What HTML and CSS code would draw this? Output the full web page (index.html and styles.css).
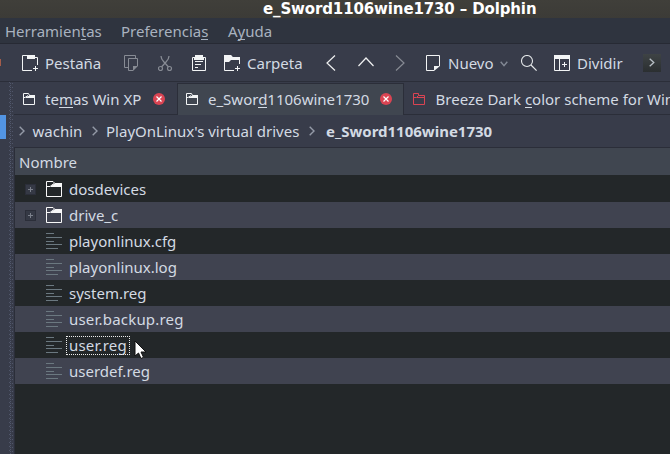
FILE: index.html
```
<!DOCTYPE html>
<html lang="es">
<head>
<meta charset="utf-8">
<title>e_Sword1106wine1730 – Dolphin</title>
<link rel="stylesheet" href="styles.css">
</head>
<body>
<svg width="0" height="0" class="defs">
  <symbol id="folder" viewBox="0 0 16 16"><path d="M.5 15.5V.5H7L9 2.5H15.5V15.5ZM.5 5.5H4L8 2.5" fill="none" stroke="currentColor"/><path d="M9 2H16V6H5V5L8.5 2.5Z" fill="currentColor"/></symbol>
  <symbol id="tabfolder" viewBox="0 0 12 12"><path d="M.5 .5H5.5L6.5 2.5H11.5V11.5H.5ZM.5 4.5H2L5 2.5" fill="none" stroke="currentColor"/><path d="M7 2H12V5H3V4L6.5 2.5Z" fill="currentColor"/></symbol>
  <symbol id="outline" viewBox="0 0 12 12"><path d="M.5 .5H5.5V2.5H11.5V11.5H.5ZM.5 4.5H3.5L5.5 2.5M4 4.5H11.5" fill="none" stroke="currentColor"/></symbol>
  <symbol id="close" viewBox="0 0 12 12"><circle cx="6" cy="6" r="6" fill="#da4453"/><path d="M3.5 3.5L8.5 8.5M8.5 3.5L3.5 8.5" stroke="#fff" stroke-width="1.2"/></symbol>
  <symbol id="lines" viewBox="0 0 16 16"><path d="M0 .5H8M0 4.5H16M0 8.5H8M0 11.5H16M0 15.5H12" stroke="#6b7880"/></symbol>
  <symbol id="chev" viewBox="0 0 6 10"><path d="M.7 .7L5 5L.7 9.3" fill="none" stroke="#949aa7" stroke-width="1.4"/></symbol>
</svg>
<header class="title">e_Sword1106wine1730 – Dolphin</header>
<nav class="menu"><span class="m1">Herramien<u>t</u>as</span><span class="m2">Preferencia<u>s</u></span><span>A<u>y</u>uda</span></nav>
<div class="toolbar">
  <span class="cut-label"></span>
  <svg class="ico" viewBox="0 0 16 16"><path d="M10 15.5H.5V.5H5M13 2.5H15.5V10M13.5 11V16M11 13.5H16" fill="none" stroke="#f2f4f5"/><path d="M5 0H13V4H5Z" fill="#f2f4f5"/></svg>
  <span>Pestaña</span>
  <svg class="ico dim" viewBox="0 0 16 16"><path d="M4 12.5H.5V.5H11.5V3M9 15.5H4.5V3.5H13.5V11" fill="none" stroke="currentColor"/><path d="M9 16V11H14Z" fill="currentColor"/></svg>
  <svg class="ico dim" viewBox="0 0 16 16"><path d="M3 1Q3 4 6 7L10.5 12M11 1Q11 4 8 7L3.5 12" fill="none" stroke="currentColor" stroke-width="1.3"/><circle cx="2.5" cy="13.5" r="2" fill="none" stroke="currentColor" stroke-width="1.2"/><circle cx="11.5" cy="13.5" r="2" fill="none" stroke="currentColor" stroke-width="1.2"/></svg>
  <svg class="ico" viewBox="0 0 16 16"><path d="M.5 2.5H13.5V15.5H.5ZM3 6.5H11M3 9.5H9M3 12.5H6" fill="none" stroke="#f2f4f5"/><path d="M3 0H11V2H12V5H2V2H3Z" fill="#f2f4f5"/></svg>
  <svg class="ico" viewBox="0 0 16 16"><path d="M10 15.5H.5V.5H7L8.5 2.5H15.5V9M13.5 11V16M11 13.5H16" fill="none" stroke="#f2f4f5"/><path d="M0 0H7L8.5 2H16V5H7L5 7H0Z" fill="#f2f4f5"/></svg>
  <span>Carpeta</span>
  <svg class="ico" viewBox="0 0 16 16"><path d="M12 .5L4 8L12 15.5" fill="none" stroke="#eff0f1" stroke-width="1.2"/></svg>
  <svg class="ico" viewBox="0 0 16 16"><path d="M.5 11L8 3L15.5 11" fill="none" stroke="#eff0f1" stroke-width="1.2"/></svg>
  <svg class="ico dim" viewBox="0 0 16 16"><path d="M4 .5L12 8L4 15.5" fill="none" stroke="currentColor" stroke-width="1.2"/></svg>
  <svg class="ico" viewBox="0 0 16 16"><path d="M9 15.5H1.5V.5H14.5V11" fill="none" stroke="#f2f4f5"/><path d="M9 16V11H15Z" fill="#f2f4f5"/></svg>
  <span>Nuevo</span>
  <svg class="down" viewBox="0 0 8 6"><path d="M.7 .7L4 4.7L7.3 .7" fill="none" stroke="#838995" stroke-width="1.4"/></svg>
  <svg class="ico" viewBox="0 0 16 16"><circle cx="6" cy="6" r="5.5" fill="none" stroke="#e5e8ea" stroke-width="1.1"/><path d="M10 10L15.6 15.6" stroke="#e5e8ea" stroke-width="1.2"/></svg>
  <svg class="ico" viewBox="0 0 16 16"><path d="M.5 .5H15.5V15.5H.5ZM5.5 4V16M10.5 7V12M8 9.5H13" fill="none" stroke="#f2f4f5"/><path d="M0 0H16V4H0Z" fill="#f2f4f5"/></svg>
  <span>Dividir</span>
  <span class="more"><svg width="6" height="9" viewBox="0 0 6 9"><path d="M.7 .7L4.8 4.5L.7 8.3" fill="none" stroke="#b9c0c7" stroke-width="1.3"/></svg></span>
</div>
<div class="main">
  <aside class="side"><span class="selected"></span><svg class="grip" width="5" height="372"><defs><pattern id="dots" width="5" height="4" patternUnits="userSpaceOnUse"><path d="M0 0h1v1H0zM1 1h1v1H1zM3 1h1v1H3zM1 3h1v1H1z" fill="#50566a"/></pattern></defs><rect width="5" height="372" fill="url(#dots)"/></svg></aside>
  <section class="content">
    <div class="tabs">
      <div class="tab t1"><svg class="ti"><use href="#tabfolder"/></svg><span>te<u>m</u>as Win XP</span><svg class="x"><use href="#close"/></svg></div>
      <div class="tab t2"><svg class="ti"><use href="#tabfolder"/></svg><span>e_Swor<u>d</u>1106wine1730</span><svg class="x"><use href="#close"/></svg></div>
      <div class="tab t3"><svg class="ti red"><use href="#outline"/></svg><span>Breeze Dark <u>c</u>olor scheme for Win</span></div>
    </div>
    <div class="crumbs"><svg class="ch"><use href="#chev"/></svg><span>wachin</span><svg class="ch"><use href="#chev"/></svg><span>PlayOnLinux's virtual drives</span><svg class="ch"><use href="#chev"/></svg><b>e_Sword1106wine1730</b></div>
    <div class="list">
      <div class="head">Nombre</div>
      <div class="row"><i class="plus"></i><svg class="fi"><use href="#folder"/></svg><span>dosdevices</span></div>
      <div class="row"><i class="plus"></i><svg class="fi"><use href="#folder"/></svg><span>drive_c</span></div>
      <div class="row"><i></i><svg class="fi"><use href="#lines"/></svg><span>playonlinux.cfg</span></div>
      <div class="row"><i></i><svg class="fi"><use href="#lines"/></svg><span>playonlinux.log</span></div>
      <div class="row"><i></i><svg class="fi"><use href="#lines"/></svg><span>system.reg</span></div>
      <div class="row"><i></i><svg class="fi"><use href="#lines"/></svg><span class="wide">user.backup.reg</span></div>
      <div class="row"><i></i><svg class="fi"><use href="#lines"/></svg><span class="focus">user.reg</span></div>
      <div class="row"><i></i><svg class="fi"><use href="#lines"/></svg><span>userdef.reg</span></div>
    </div>
  </section>
</div>
<svg class="pointer" viewBox="0 0 14 21"><path d="M1 1V16L4.5 13L7 18.5L9.5 17.3L7 12H12Z" fill="#fff" stroke="#111"/></svg>
</body>
</html>
```
FILE: styles.css
```
* { box-sizing: border-box; }
body { margin: 0; width: 670px; height: 454px; overflow: hidden; position: relative; background: #383c4a; color: #d3dae3; font: 15px/20px "Noto Sans", sans-serif; white-space: nowrap; }
svg { display: block; flex: none; }
.defs { position: absolute; }
u { text-decoration: none; background: linear-gradient(currentColor, currentColor) 0 18px / 100% 1px no-repeat; }
.title { height: 18px; padding-left: 263px; background: linear-gradient(#403f3a, #3c3b37); color: #fff; font: 700 15px/18px "DejaVu Sans", sans-serif; letter-spacing: -.13px; }
.menu { display: flex; height: 26px; padding: 3px 0 0 5px; background: #2f343f; border-bottom: 1px solid #272a34; color: #a9b2bf; }
.m1 { width: 116px; }
.m2 { width: 107px; }
.toolbar { display: grid; grid-template-columns: 22px 23px 79px 34px 34px 32px 23px 76px 35px 34px 33px 23px 52px 21px 33px 23px 66px 18px; align-items: center; height: 38px; border-bottom: 1px solid #2b2e39; }
.ico { width: 16px; height: 16px; }
.dim { color: #878b94; }
.cut-label { width: 1px; height: 7px; background: #a45c4a; }
.down { width: 8px; height: 6px; margin-top: 3px; }
.more { display: grid; place-items: center; width: 18px; height: 18px; background: linear-gradient(#3e4345, #2b2f31); }
.main { display: flex; height: 372px; }
.side { display: flex; width: 14px; justify-content: space-between; }
.selected { width: 6px; height: 24px; margin-top: 33px; background: #5294e2; }
.content { width: 656px; }
.tabs { display: flex; height: 33px; }
.tab { display: flex; align-items: center; flex: none; height: 33px; border-bottom: 1px solid #2b2e39; }
.t1 { width: 163px; padding: 2px 0 0 9px; }
.t2 { width: 227px; padding: 0 0 2px 8px; margin-top: 1px; height: 32px; background: #404650; border: solid #2b2e39; border-width: 1px 1px 0; }
.t3 { width: 266px; padding: 2px 0 0 9px; overflow: hidden; }
.ti { width: 12px; height: 12px; margin-right: 10px; color: #f2f4f5; }
.ti.red { color: #da4453; }
.t3 span { margin-left: .6px; }
.x { width: 12px; height: 12px; margin-left: 11px; }
.t1 .x { margin-left: 12px; }
.crumbs { display: flex; align-items: center; height: 32px; padding-left: 5px; }
.ch { width: 6px; height: 10px; margin-right: 7.5px; }
.crumbs span { margin-right: 9.5px; }
.crumbs span + .ch { margin-right: 8.2px; }
.crumbs b { margin-left: 3px; }
.list { height: 307px; border: solid #2b2e39; border-width: 1px 0 0 1px; background: #232729; }
.head { height: 28px; padding: 4px 0 0 4px; background: #404650; border-bottom: 1px solid #232729; }
.row { display: flex; align-items: center; height: 26px; }
.row:nth-child(odd) { background: #404350; }
.row i { width: 11px; height: 11px; margin: 0 10px 0 10px; }
.plus { border: 1px solid #2b2e39; background: linear-gradient(#7c818c, #7c818c) center / 5px 1px no-repeat, linear-gradient(#7c818c, #7c818c) center / 1px 5px no-repeat, #353945; }
.fi { width: 16px; height: 16px; margin-right: 7px; color: #f8f8f8; }
.wide, .focus { letter-spacing: .2px; }
.focus { padding: 0 1px; margin-left: -1px; outline: 1px dotted #eee; line-height: 15px; outline-offset: 1px; }
.pointer { position: absolute; left: 134px; top: 340px; width: 14px; height: 21px; }
```
